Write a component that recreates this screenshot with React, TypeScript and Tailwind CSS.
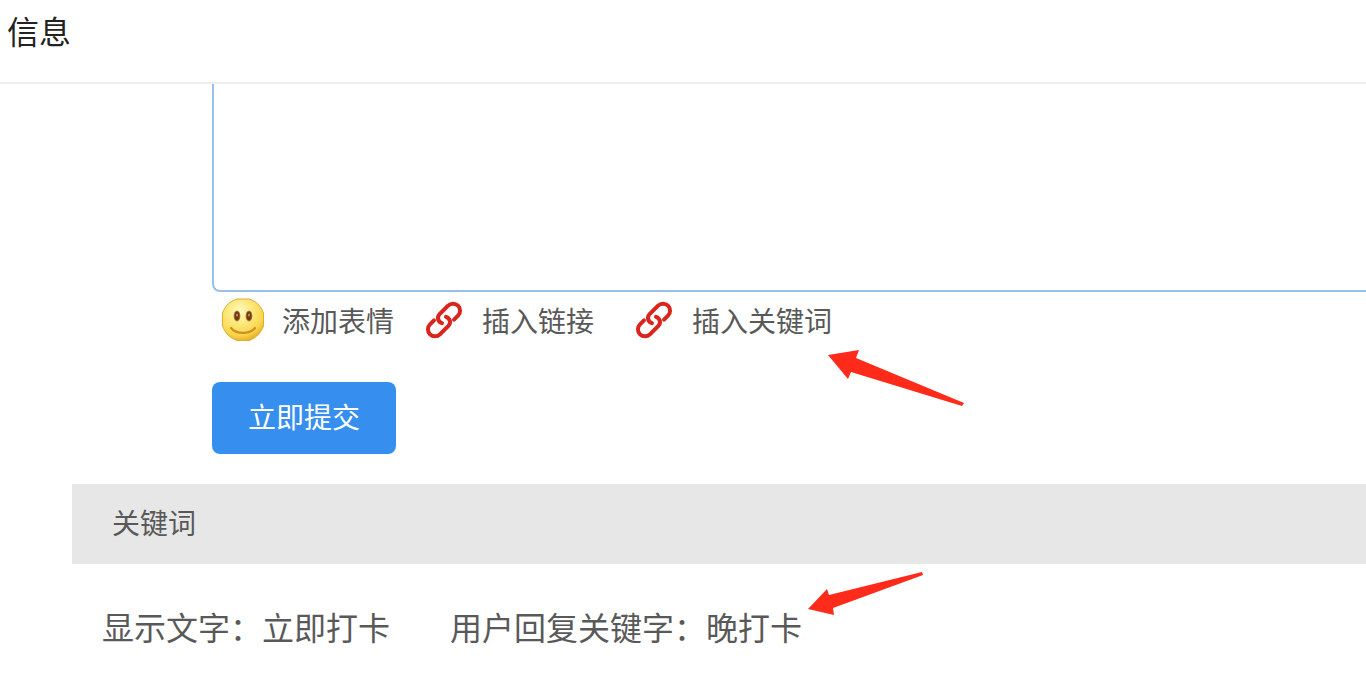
import { useState } from "react";

function SmileIcon() {
  return (
    <svg viewBox="0 0 42 42" className="size-[42px] shrink-0 overflow-visible" aria-hidden="true">
      <defs>
        <radialGradient id="face" cx="0.42" cy="0.3" r="0.74">
          <stop offset="0" stopColor="#fff9c4" />
          <stop offset="0.35" stopColor="#fdeb85" />
          <stop offset="0.78" stopColor="#fad64c" />
          <stop offset="1" stopColor="#e3aa22" />
        </radialGradient>
      </defs>
      <path
        d="M15 0H27C34 2 39 7 41.500 14V27C39 34 34 39 27 41.500H15C8 39 3 34 0.500 27V14C3 7 8 2 15 0Z"
        fill="url(#face)"
        stroke="#dcae3a"
        strokeWidth="1"
      />
      <ellipse cx="15" cy="17" rx="3.4" ry="5.4" fill="#b5803a" />
      <ellipse cx="27" cy="17" rx="3.4" ry="5.4" fill="#b5803a" />
      <ellipse cx="15" cy="17" rx="2.5" ry="4.4" fill="#74380f" />
      <ellipse cx="27" cy="17" rx="2.5" ry="4.4" fill="#74380f" />
      <ellipse cx="15" cy="16" rx="1" ry="1.5" fill="#b98a80" />
      <ellipse cx="27" cy="16" rx="1" ry="1.5" fill="#b98a80" />
      <path
        d="M9 29C14 35.500 28 35.500 33 29"
        fill="none"
        stroke="#cf9020"
        strokeWidth="2.2"
        strokeLinecap="round"
      />
    </svg>
  );
}

function LinkIcon() {
  return (
    <svg
      viewBox="0 0 40 40"
      className="size-10 shrink-0"
      fill="none"
      stroke="#d9251d"
      strokeWidth="4"
      strokeLinecap="round"
      aria-hidden="true"
    >
      <path d="M30 19.600L34 15.600A7 7 0 0 0 24.100 5.700L15.600 14.200C12.600 17.400 14 21.800 18 23.200" />
      <path d="M10 20.400L6 24.400A7 7 0 0 0 15.900 34.300L24.400 25.800C27.400 22.600 26 18.200 22 16.800" />
    </svg>
  );
}

const toolClass = "flex cursor-pointer items-center gap-[18px] whitespace-nowrap";

export default function App() {
  const [message, setMessage] = useState("");

  return (
    <div className="min-h-screen overflow-x-hidden bg-white font-['Liberation_Sans','Noto_Sans_CJK_SC',sans-serif] text-[#595959]">
      <header className="border-b-2 border-[#eeeeee] pt-px pb-[17px] pl-[7px]">
        <h1 className="text-[32px] leading-[64px] text-[#222222]">信息</h1>
      </header>

      <main className="pl-[72px]">
        <form className="pl-[140px]" onSubmit={(event) => event.preventDefault()}>
          <textarea
            aria-label="信息"
            value={message}
            onChange={(event) => setMessage(event.target.value)}
            className="block h-[208px] w-full resize-none rounded-bl-lg border-b-2 border-l-2 border-[#98c0e8] p-4 text-[28px] outline-none"
          />

          <div className="flex h-14 items-center pl-[10px] text-[28px] leading-[36px]">
            <button type="button" className={toolClass}>
              <SmileIcon />
              <span className="pt-1.5">添加表情</span>
            </button>
            <button type="button" className={`${toolClass} ml-[30px]`}>
              <LinkIcon />
              <span className="pt-1.5">插入链接</span>
            </button>
            <div className="relative ml-10">
              <button type="button" className={toolClass}>
                <LinkIcon />
                <span className="pt-1.5">插入关键词</span>
              </button>
              <svg
                viewBox="0 0 136 56"
                className="absolute top-full left-full mt-[9px] -ml-1 h-14 w-[136px]"
                aria-hidden="true"
              >
                <path d="M0 5L31 0L28 8L136 53L134 56L23 22L20 29Z" fill="#ff2b1a" />
              </svg>
            </div>
          </div>

          <button
            type="submit"
            className="mt-[34px] block h-[72px] cursor-pointer rounded-lg bg-[#368fee] px-9 pt-0.5 text-[28px] text-white"
          >
            立即提交
          </button>
        </form>

        <section className="mt-[30px]">
          <h2 className="bg-[#e7e7e7] pt-0.5 pl-10 text-[28px] leading-[78px]">关键词</h2>
          <div className="flex gap-[60px] pt-[33px] pl-[30px] text-[32px] leading-[64px] whitespace-nowrap">
            <p>显示文字：立即打卡</p>
            <p className="relative">
              用户回复关键字：晚打卡
              <svg
                viewBox="0 0 116 43"
                className="absolute bottom-full left-full -mb-[18px] ml-[6px] h-[43px] w-[116px]"
                aria-hidden="true"
              >
                <path d="M0 37L19 17L21 23L114 0L115 3L25 36L26 43Z" fill="#ff2b1a" />
              </svg>
            </p>
          </div>
        </section>
      </main>
    </div>
  );
}
